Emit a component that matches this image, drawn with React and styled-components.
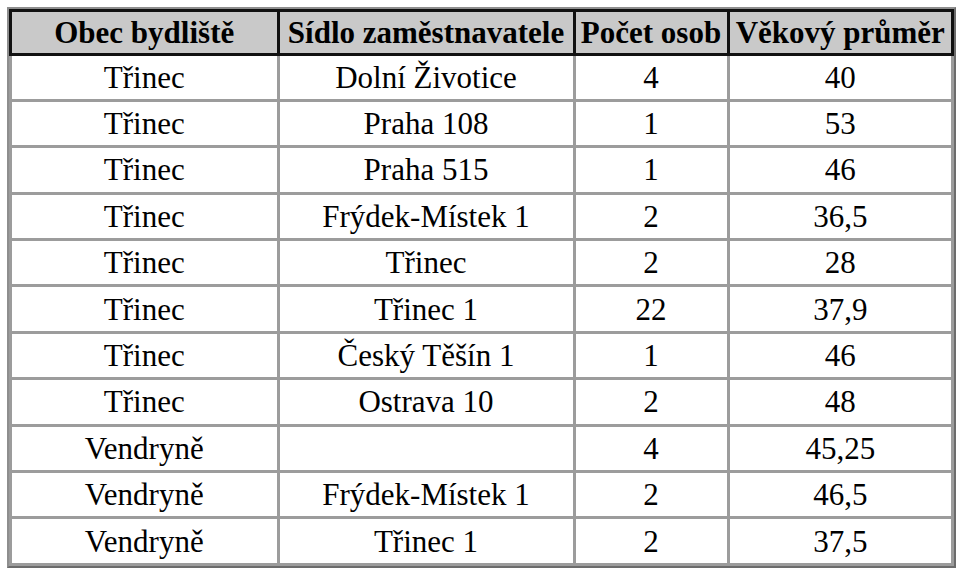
import React from 'react';
import styled, {createGlobalStyle} from 'styled-components';

const GlobalStyle = createGlobalStyle`
  body {
    margin: 0;
    background: #fff;
    font-family: "Liberation Serif", "Times New Roman", serif;
    color: #000;
  }
`;

const Frame = styled.div`
  display: inline-block;
  margin: 7px 0 0 7px;
  border: 2px solid #8e8e8e;
  border-right-color: #6c6c6c;
  border-bottom-color: #6c6c6c;
`;

const Table = styled.table`
  border-collapse: collapse;
  table-layout: fixed;
  width: 942px;
  font-size: 31px;
`;

const HeadRow = styled.tr`
  height: 43.5px;
`;

const Row = styled.tr`
  height: 46.4px;
`;

const HeadCell = styled.th`
  background: #c9c9c9;
  border: 3px solid #111;
  font-weight: bold;
  text-align: center;
  vertical-align: middle;
  white-space: nowrap;
  padding: 0;
  line-height: 1;
`;

const Cell = styled.td`
  border: 3px solid #9c9c9c;
  text-align: center;
  vertical-align: middle;
  white-space: nowrap;
  padding: 0;
  line-height: 1;
`;

const columns = [
  {title: 'Obec bydliště', width: 267.5},
  {title: 'Sídlo zaměstnavatele', width: 296},
  {title: 'Počet osob', width: 154},
  {title: 'Věkový průměr', width: 224.5},
];

const rows = [
  ['Třinec', 'Dolní Životice', '4', '40'],
  ['Třinec', 'Praha 108', '1', '53'],
  ['Třinec', 'Praha 515', '1', '46'],
  ['Třinec', 'Frýdek-Místek 1', '2', '36,5'],
  ['Třinec', 'Třinec', '2', '28'],
  ['Třinec', 'Třinec 1', '22', '37,9'],
  ['Třinec', 'Český Těšín 1', '1', '46'],
  ['Třinec', 'Ostrava 10', '2', '48'],
  ['Vendryně', '', '4', '45,25'],
  ['Vendryně', 'Frýdek-Místek 1', '2', '46,5'],
  ['Vendryně', 'Třinec 1', '2', '37,5'],
];

export default function App() {
  return (
    <>
      <GlobalStyle />
      <Frame>
        <Table>
          <colgroup>
            {columns.map(c => <col key={c.title} style={{width: c.width}} />)}
          </colgroup>
          <thead>
            <HeadRow>
              {columns.map(c => <HeadCell key={c.title}>{c.title}</HeadCell>)}
            </HeadRow>
          </thead>
          <tbody>
            {rows.map((r, i) => (
              <Row key={i}>
                {r.map((v, j) => <Cell key={j}>{v}</Cell>)}
              </Row>
            ))}
          </tbody>
        </Table>
      </Frame>
    </>
  );
}
